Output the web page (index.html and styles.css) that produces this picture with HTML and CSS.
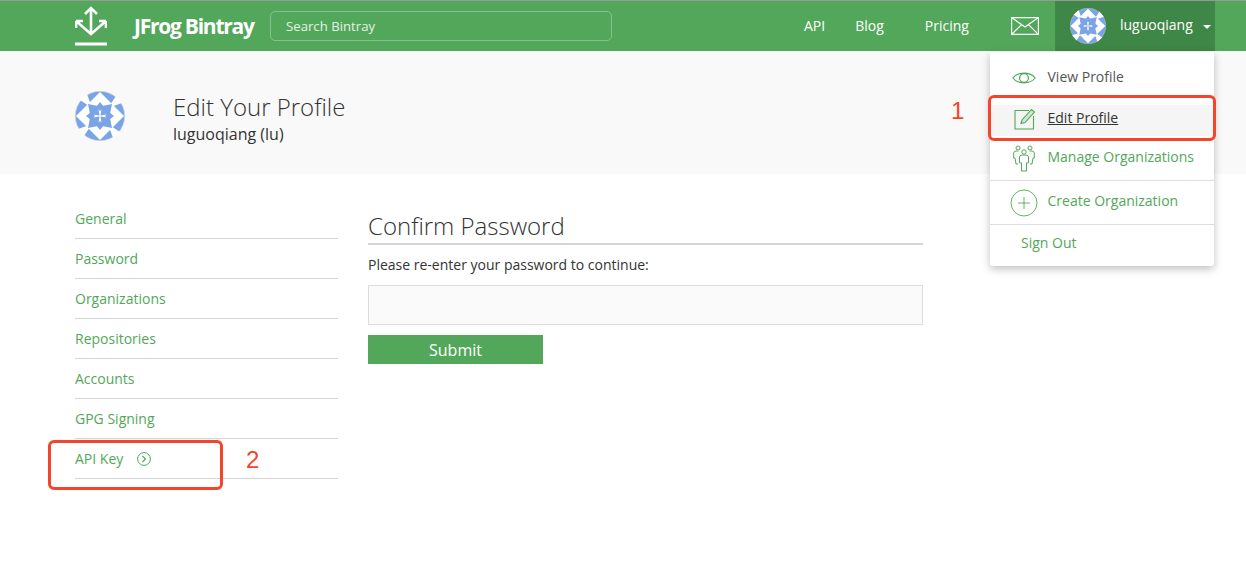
FILE: index.html
```html
<!DOCTYPE html>
<html lang="en">
<head>
  <title>Edit Your Profile</title>
  <link rel="stylesheet" href="styles.css">
</head>
<body>
  <svg class="defs" width="0" height="0">
    <g id="quad">
      <path fill="#fff" d="M17 17 L5 9 L12 3 Z"/>
      <path fill="#7ba4e6" d="M13 13 L23 15 L24.5 24.5 L15 23 Z M11 25 L16 21 L20 25 L16 29 Z"/>
    </g>
    <symbol id="identicon" viewBox="0 0 50 50">
      <circle cx="25" cy="25" r="24.7" fill="#7ba4e6" stroke="#d5d5d5" stroke-width=".6"/>
      <path fill="#fff" d="M25 1 L49 25 L25 49 L1 25 Z"/>
      <use href="#quad"/>
      <use href="#quad" transform="rotate(90 25 25)"/>
      <use href="#quad" transform="rotate(180 25 25)"/>
      <use href="#quad" transform="rotate(270 25 25)"/>
    </symbol>
  </svg>

  <header class="topbar">
    <a class="logo">
      <svg width="32" height="40" viewBox="0 0 32 40" fill="none" stroke="#fff" stroke-width="2.6">
        <path d="M16 28 V2 M10 8 L16 2 L22 8"/>
        <path d="M1 15 L16 28 L31 15 M1 15 V22 M1 15 H8 M31 15 V22 M31 15 H24"/>
        <path d="M0 38 H32" stroke-width="3"/>
      </svg>
      <span class="logo-text">JFrog Bintray</span>
    </a>
    <div class="search">Search Bintray</div>
    <nav class="top-nav">
      <a class="nav-api">API</a>
      <a class="nav-blog">Blog</a>
      <a class="nav-pricing">Pricing</a>
    </nav>
    <svg class="mail" width="28" height="18" viewBox="0 0 28 18" fill="none" stroke="#fff" stroke-width="1.2">
      <path d="M.6 .6 H27.4 V17.4 H.6 Z M.6 .6 L14 10 L27.4 .6 M.6 17.4 L10.5 7.6 M27.4 17.4 L17.5 7.6"/>
    </svg>
    <div class="user">
      <svg class="user-pic" width="36" height="36"><use href="#identicon"/></svg>
      <span class="user-name">luguoqiang</span>
      <i class="caret"></i>
    </div>
  </header>

  <section class="hero">
    <svg class="hero-pic" width="50" height="50"><use href="#identicon"/></svg>
    <div class="hero-text">
      <h1>Edit Your Profile</h1>
      <p>luguoqiang (lu)</p>
    </div>
  </section>

  <div class="content">
    <ul class="side">
      <li>General</li>
      <li>Password</li>
      <li>Organizations</li>
      <li>Repositories</li>
      <li>Accounts</li>
      <li>GPG Signing</li>
      <li>API Key
        <svg class="go" width="14" height="14" viewBox="0 0 14 14" fill="none" stroke="#53a75a">
          <circle cx="7" cy="7" r="6.4"/>
          <path d="M5.5 4 L8.5 7 L5.5 10" stroke-width="1.2"/>
        </svg>
      </li>
    </ul>
    <form class="confirm">
      <h2>Confirm Password</h2>
      <label for="pw">Please re-enter your password to continue:</label>
      <input id="pw" type="password">
      <button type="button">Submit</button>
    </form>
  </div>

  <div class="menu">
    <a class="row row-view">
      <svg width="24" height="14" viewBox="0 0 24 14" fill="none" stroke="#53a75a" stroke-width="1.2">
        <path d="M.8 7 C6 .5 18 .5 23.2 7 C18 13.5 6 13.5 .8 7 Z"/>
        <circle cx="12" cy="7" r="4.4"/>
      </svg>
      <span>View Profile</span>
    </a>
    <a class="row row-edit">
      <svg width="22" height="22" viewBox="0 0 22 22" fill="none" stroke="#53a75a" stroke-width="1.1">
        <path d="M15 2.5 H1 V21 H19.5 V8"/>
        <path d="M7 15.5 L8 12 L17.5 1.5 L20.5 4 L11 14.5 Z" fill="#cfe6d1"/>
      </svg>
      <span>Edit Profile</span>
    </a>
    <a class="row row-orgs">
      <svg width="22" height="27" viewBox="0 0 22 27" fill="none" stroke="#53a75a" stroke-width="1">
        <circle cx="5" cy="3" r="2"/>
        <circle cx="17" cy="3" r="2"/>
        <circle cx="11" cy="7" r="2.2"/>
        <path d="M5 19 H3 L2 13 H.7 V8 C.7 6 3 6 5.5 6 M17 19 H19 L20 13 H21.3 V8 C21.3 6 19 6 16.5 6"/>
        <path d="M8.5 26 V18 H6.5 V12 C6.5 10 9 10 11 10 C13 10 15.5 10 15.5 12 V18 H13.5 V26 Z"/>
      </svg>
      <span>Manage Organizations</span>
    </a>
    <a class="row row-create">
      <svg width="28" height="28" viewBox="0 0 28 28" fill="none" stroke="#53a75a" stroke-width=".9">
        <circle cx="14" cy="14" r="13"/>
        <path d="M14 8 V20 M8 14 H20"/>
      </svg>
      <span>Create Organization</span>
    </a>
    <a class="row row-out"><span>Sign Out</span></a>
  </div>

  <div class="mark mark-edit"></div>
  <div class="mark mark-key"></div>
  <div class="num num-1">1</div>
  <div class="num num-2">2</div>
</body>
</html>
```

FILE: styles.css
```css
body {
  margin: 0;
  background-color: #fff;
  font-family: "Open Sans", sans-serif;
  font-size: 14px;
  color: #333;
  height: 575px;
  overflow: hidden;
  position: relative;
}
a {
  color: inherit;
  text-decoration: none;
}
.defs {
  position: absolute;
}

/* top bar */
.topbar {
  display: flex;
  align-items: center;
  height: 50px;
  border-top: 1px solid #999;
  padding-left: 75px;
  background-color: #53a75a;
  color: #fff;
}
.logo {
  display: flex;
  align-items: center;
  width: 195px;
  flex: none;
}
.logo-text {
  margin-left: 27px;
  font-size: 21px;
  font-weight: 700;
  letter-spacing: -1.25px;
  white-space: nowrap;
}
.search {
  box-sizing: border-box;
  width: 342px;
  height: 30px;
  border: 1px solid #86c18b;
  border-radius: 5px;
  padding-left: 15px;
  line-height: 28px;
  font-size: 13.2px;
  color: #e4f2e5;
}
.top-nav {
  display: flex;
  margin-left: 192px;
  margin-bottom: 2px;
  width: 207px;
  flex: none;
  font-size: 14px;
}
.nav-blog {
  margin-left: 30px;
}
.nav-pricing {
  margin-left: 41px;
}
.mail {
  flex: none;
}
.user {
  display: flex;
  align-items: center;
  box-sizing: border-box;
  width: 160px;
  height: 50px;
  margin-left: 16px;
  padding-left: 15px;
  background-color: #3f8746;
}
.user-pic {
  margin-right: 14px;
}
.user-name {
  margin-bottom: 3px;
}
.caret {
  margin-left: 10px;
  margin-top: 2px;
  border-left: 4px solid transparent;
  border-right: 4px solid transparent;
  border-top: 4px solid #fff;
}

/* title band */
.hero {
  display: flex;
  align-items: center;
  height: 123px;
  padding-left: 75px;
  background-color: #f9f9f9;
}
.hero-pic {
  margin-top: 7px;
  margin-right: 48px;
}
.hero-text {
  margin-top: 12px;
}
.hero h1 {
  margin: 0;
  font-size: 24px;
  font-weight: 300;
  line-height: 30px;
  color: #333;
}
.hero p {
  margin: 0;
  font-size: 16px;
  line-height: 24px;
}

/* page body */
.content {
  display: flex;
  padding: 25px 0 0 75px;
}
.side {
  list-style-type: none;
  margin: 0;
  padding: 0;
  width: 263px;
  color: #53a75a;
}
.side li {
  height: 39px;
  border-bottom: 1px solid #d5d5d5;
  line-height: 40px;
}
.go {
  margin-left: 10px;
  vertical-align: -2px;
}
.confirm {
  width: 555px;
  margin-left: 30px;
}
.confirm h2 {
  margin: 0;
  height: 44px;
  border-bottom: 2px solid #d5d5d5;
  font-size: 24px;
  font-weight: 300;
  line-height: 53px;
}
.confirm label {
  display: block;
  margin-top: 10px;
  line-height: 20px;
}
.confirm input {
  display: block;
  box-sizing: border-box;
  width: 100%;
  height: 40px;
  margin-top: 10px;
  border: 1px solid #ddd;
  background-color: #fafafa;
}
.confirm button {
  display: block;
  width: 175px;
  height: 29px;
  margin-top: 10px;
  border: none;
  background-color: #53a75a;
  color: #fff;
  font-family: "Open Sans", sans-serif;
  font-size: 16px;
}

/* account dropdown */
.menu {
  position: absolute;
  left: 990px;
  top: 52px;
  width: 224px;
  height: 214px;
  background-color: #fff;
  border-radius: 0 0 3px 3px;
  box-shadow: 0 3px 8px rgba(0,0,0,0.25);
  color: #53a75a;
  font-size: 14px;
}
.row {
  display: flex;
  align-items: center;
  box-sizing: border-box;
  padding-left: 57.5px;
  position: relative;
}
.row svg {
  position: absolute;
}
.row-view {
  height: 52px;
  padding-bottom: 4px;
  color: #555;
}
.row-view svg {
  left: 22px;
  top: 19px;
}
.row-edit {
  height: 31px;
  margin-top: 1px;
  padding-bottom: 7px;
  background-color: #f5f5f5;
  color: #333;
  text-decoration: underline;
}
.row-edit svg {
  left: 24px;
  top: 3px;
}
.row-orgs {
  height: 45px;
  padding-bottom: 4px;
  border-bottom: 1px solid #ddd;
}
.row-orgs svg {
  left: 23px;
  top: 9px;
}
.row-create {
  height: 44px;
  padding-bottom: 5px;
  border-bottom: 1px solid #ddd;
}
.row-create svg {
  left: 20px;
  top: 8px;
}
.row-out {
  height: 41px;
  padding-left: 31px;
  padding-bottom: 7px;
}

/* red annotations */
.mark {
  position: absolute;
  box-sizing: border-box;
  border: 3px solid #f4452c;
  border-radius: 6px;
}
.mark-edit {
  left: 988px;
  top: 95px;
  width: 228px;
  height: 46px;
}
.mark-key {
  left: 48px;
  top: 440px;
  width: 175px;
  height: 50px;
}
.num {
  position: absolute;
  color: #f4452c;
  font-family: "Liberation Sans", sans-serif;
  font-size: 24px;
  line-height: 28px;
}
.num-1 {
  left: 951px;
  top: 97px;
}
.num-2 {
  left: 246px;
  top: 446px;
}
```
